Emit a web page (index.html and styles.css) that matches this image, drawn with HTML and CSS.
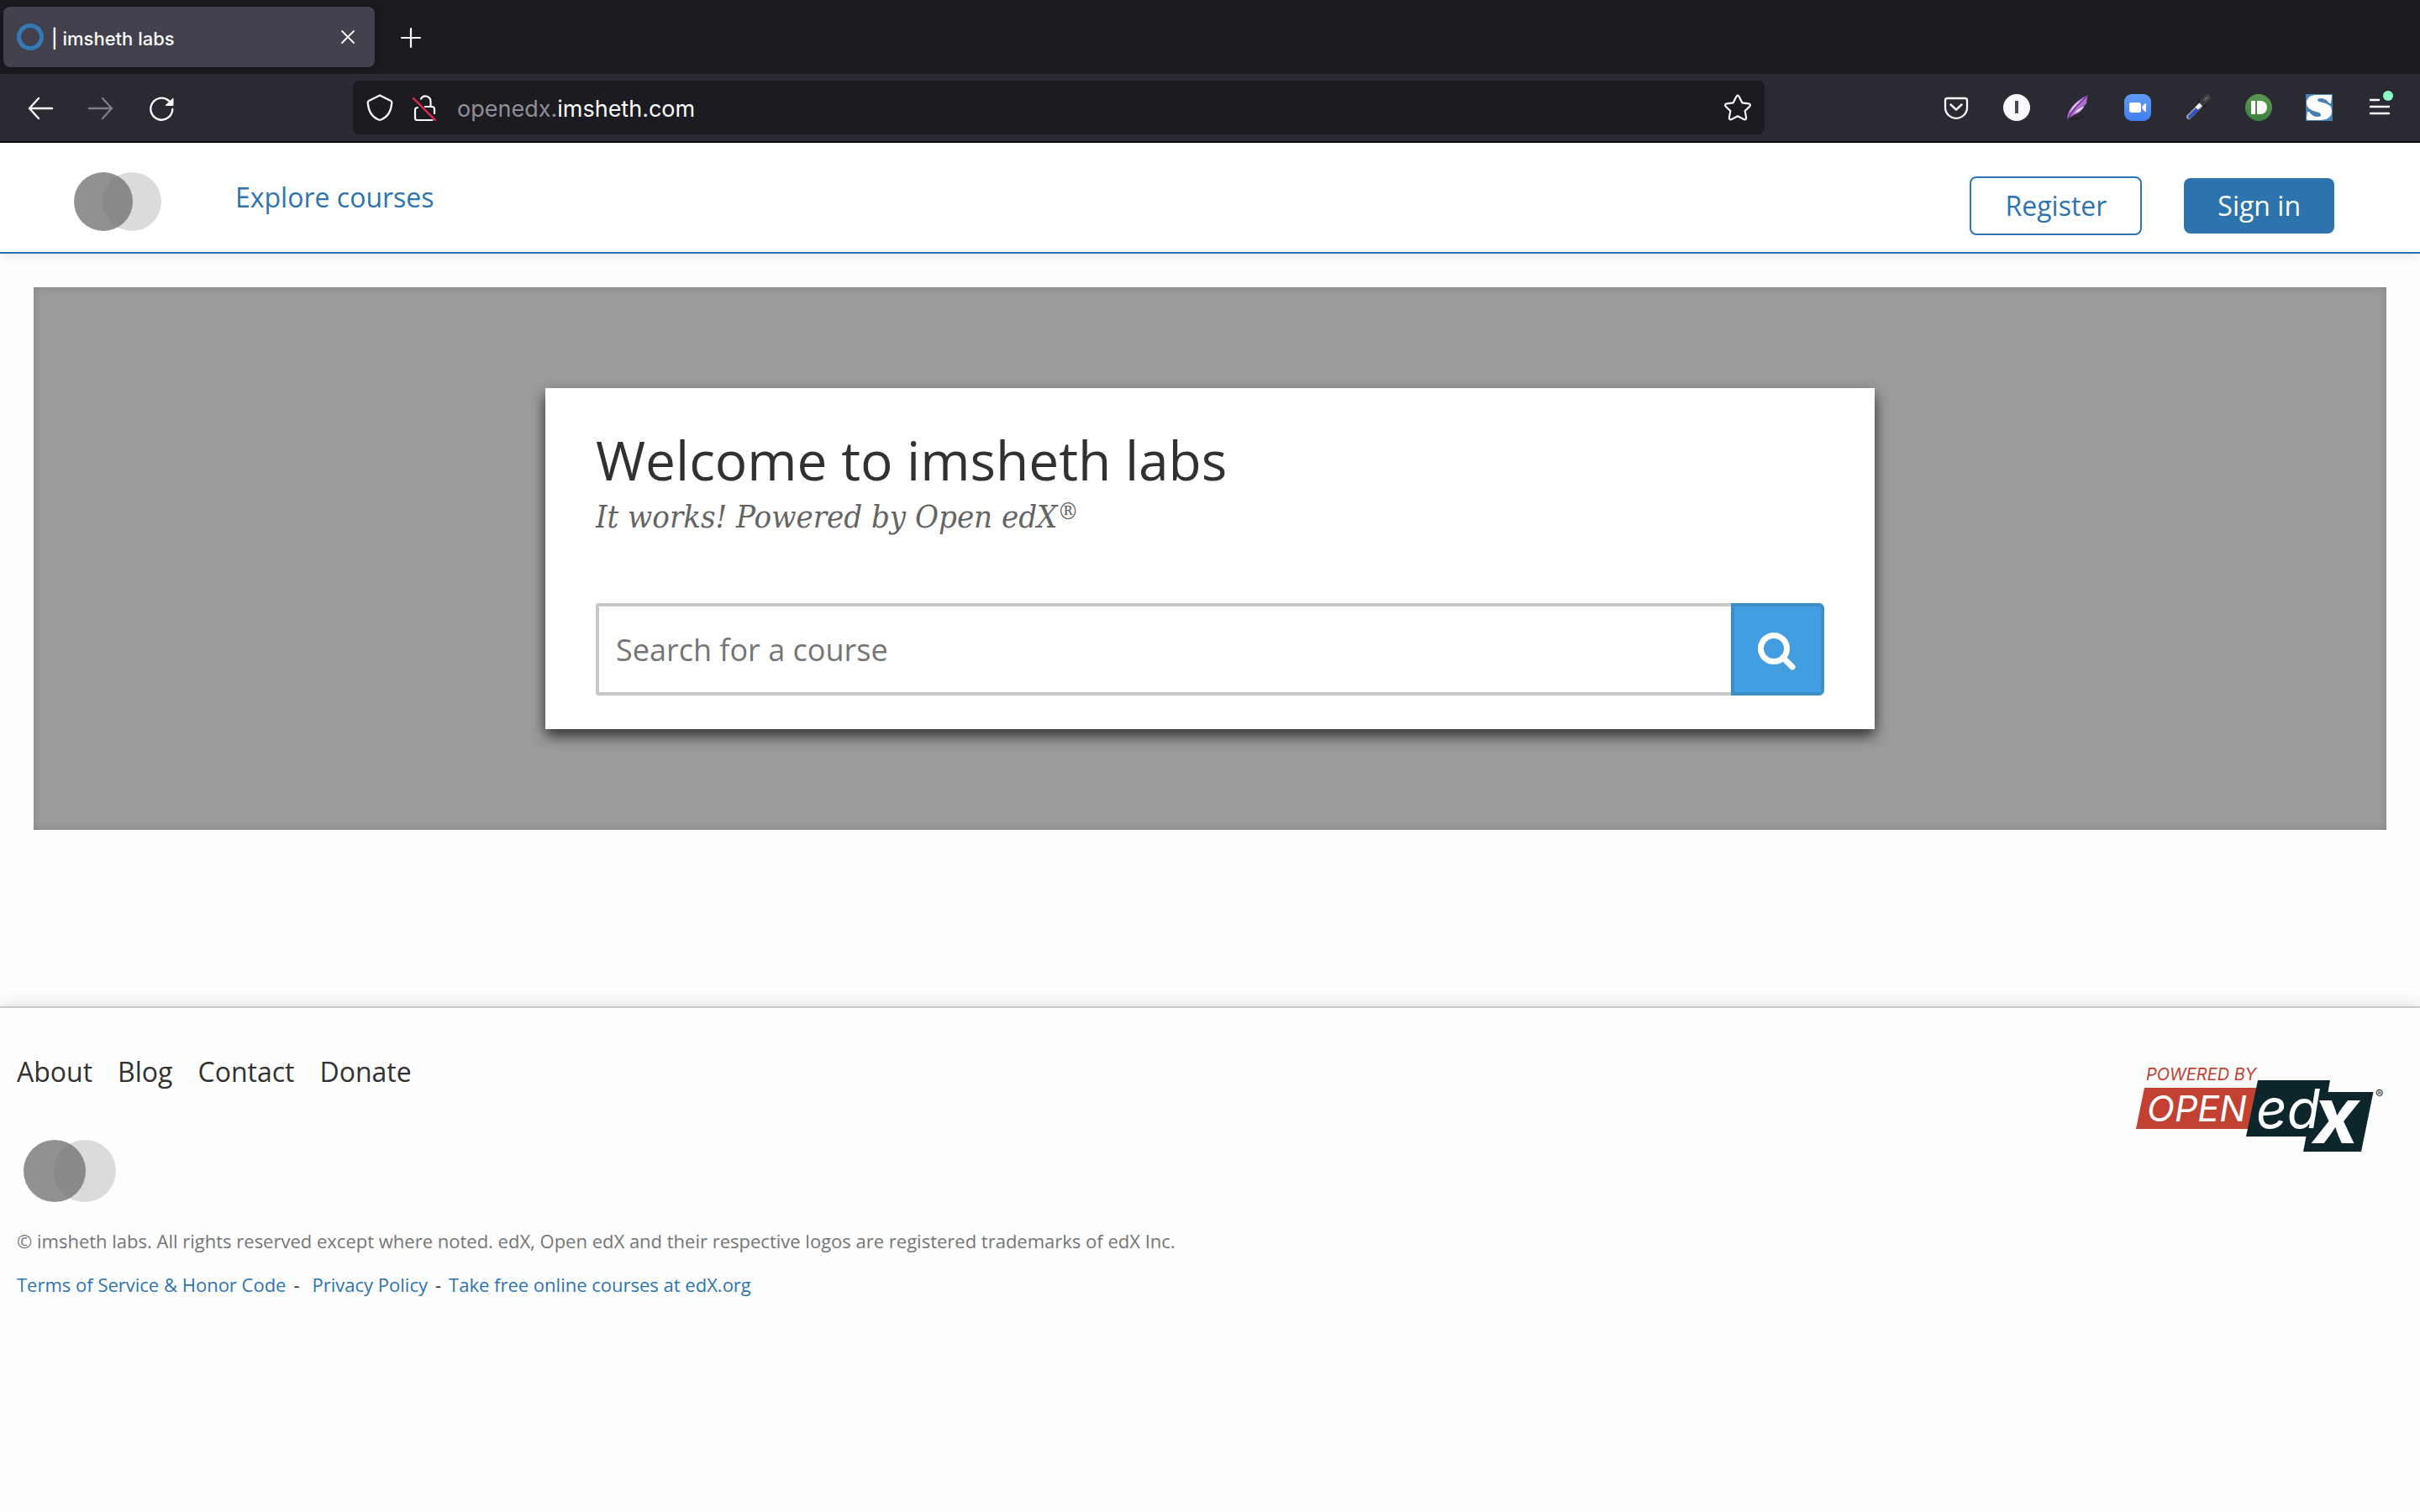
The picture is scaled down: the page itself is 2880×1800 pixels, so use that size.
FILE: index.html
```html
<!DOCTYPE html>
<html lang="en">
<head>
<meta charset="utf-8">
<title>| imsheth labs</title>
<link rel="stylesheet" href="styles.css">
</head>
<body>
<div class="browser">
  <div class="tab-strip">
    <div class="tab">
      <svg class="favicon" viewBox="0 0 32 32" aria-hidden="true"><circle cx="16" cy="16" r="13.500" fill="none" stroke="#337ab7" stroke-width="5"/></svg>
      <span class="tab-title">| imsheth labs</span>
      <button class="icon-button tab-close" aria-label="Close tab"><svg viewBox="0 0 16 16"><path d="M1 1l14 14M15 1L1 15" fill="none" stroke="#fbfbfe" stroke-width="1.800" stroke-linecap="round"/></svg></button>
    </div>
    <button class="icon-button new-tab" aria-label="New tab"><svg viewBox="0 0 24 24"><path d="M12 1v22M1 12h22" fill="none" stroke="#fbfbfe" stroke-width="2.200" stroke-linecap="round"/></svg></button>
  </div>
  <div class="toolbar">
    <div class="tool-group">
      <button class="icon-button tool" aria-label="Back"><svg viewBox="0 0 32 32"><path d="M30 17H3M14 5L3 17l11 12" fill="none" stroke="#fbfbfe" stroke-width="2.400" stroke-linecap="round" stroke-linejoin="round"/></svg></button>
      <button class="icon-button tool" aria-label="Forward" disabled><svg viewBox="0 0 32 32"><path d="M2 17h27M18 5l11 12-11 12" fill="none" stroke="#7e7d85" stroke-width="2.400" stroke-linecap="round" stroke-linejoin="round"/></svg></button>
      <button class="icon-button tool" aria-label="Reload"><svg viewBox="0 0 32 32"><path d="M29.300 18A13 13 0 1 1 25 8" fill="none" stroke="#fbfbfe" stroke-width="2.400" stroke-linecap="round"/><path d="M30 5v8.500h-9z" fill="#fbfbfe" stroke="#fbfbfe" stroke-linejoin="round"/></svg></button>
    </div>
    <div class="url-bar">
      <svg class="tool" viewBox="0 0 32 32" aria-hidden="true"><path d="M16 1.500L29 8q1.500.8 1.300 2.400C29.600 19 26 27 18 30.300q-2 .9-4 0C6 27 2.400 19 1.700 10.400Q1.500 8.800 3 8z" fill="none" stroke="#fbfbfe" stroke-width="2.200" stroke-linejoin="round"/></svg>
      <svg class="tool" viewBox="0 0 32 32" aria-hidden="true"><path d="M11 5.500a6.200 6.200 0 0 1 11.500 3.200v6M7 16q-3 .5-3 2.500v10q0 2.500 2.500 2.500h18M16 15h8q3 0 3 3v5" fill="none" stroke="#fbfbfe" stroke-width="2.200" stroke-linecap="round"/><path d="M2 5l26 26" stroke="#e22850" stroke-width="2.400" stroke-linecap="round"/></svg>
      <span class="url">openedx.<span class="url-domain">imsheth.com</span></span>
      <button class="icon-button tool" aria-label="Bookmark this page"><svg viewBox="0 0 32 32"><path d="M14.200 3.200q1.800-3 3.600 0l3.500 7.100 7.600 1q3.300.8 1.300 3.400l-5.500 5.400 1.400 7.900q.1 3.100-2.800 2L16 26.200 8.700 30q-2.900 1.100-2.800-2l1.400-7.900-5.500-5.400q-2-2.600 1.300-3.400l7.600-1z" fill="none" stroke="#fbfbfe" stroke-width="2.200" stroke-linejoin="round"/></svg></button>
    </div>
    <div class="tool-group">
      <button class="icon-button tool" aria-label="Save to Pocket"><svg viewBox="0 0 32 32"><path d="M5.500 5h21q2.500 0 2.500 2.500V16a13 12.800 0 0 1-26 0V7.500Q3 5 5.500 5z" fill="none" stroke="#fbfbfe" stroke-width="2.300"/><path d="M9.500 12.500l6.500 6.200 6.500-6.200" fill="none" stroke="#fbfbfe" stroke-width="2.500" stroke-linecap="round" stroke-linejoin="round"/></svg></button>
      <button class="icon-button tool" aria-label="Instapaper"><svg viewBox="0 0 32 32"><circle cx="16" cy="16" r="16" fill="#fbfbfe"/><path d="M14 8h4v15h-4z" fill="#4a4a52"/></svg></button>
      <button class="icon-button tool" aria-label="Feather"><svg viewBox="0 0 32 32"><path d="M10 30q9 1 17-4-8 2-17 3z" fill="#1f1d27"/><path d="M28.500 1Q16 7 10 15q-6 7-6 16 3-4 8-6 9-3 12-10l-2 .3Q28 12 27.500 7.500z" fill="#a96fce"/><path d="M26 4Q14 10 10 16l-4 7 8-8z" fill="#d9c4ee"/><path d="M25 14q-5 7-13 9l5-5z" fill="#e8dcf4"/><path d="M28 2Q12 16 4.500 30" stroke="#6f2c91" stroke-width="1.500" fill="none"/></svg></button>
      <button class="icon-button tool" aria-label="Zoom"><svg viewBox="0 0 32 32"><defs><linearGradient id="zoom-blue" x2="0" y2="1"><stop stop-color="#609bf4"/><stop offset="1" stop-color="#437ef0"/></linearGradient></defs><rect width="32" height="32" rx="9" fill="url(#zoom-blue)"/><path d="M6 12q0-2 2-2h9q3 0 3 3v7q0 2-2 2H9q-3 0-3-3zM21.500 14.500l3-3q1.500-1.200 1.500 0v9q0 1.200-1.500 0l-3-3z" fill="#fff"/></svg></button>
      <button class="icon-button tool" aria-label="Color picker"><svg viewBox="0 0 32 32"><path d="M19 13L5 27" stroke="#a2a2a6" stroke-width="6" stroke-linecap="round"/><path d="M15 18L6 27" stroke="#3552c8" stroke-width="4" stroke-linecap="round"/><path d="M20 11l-6 6" stroke="#eeeef4" stroke-width="4"/><path d="M18 8l6 6" stroke="#1c1c1e" stroke-width="4" stroke-linecap="round"/><path d="M22 9l5-5" stroke="#3c3c3e" stroke-width="8" stroke-linecap="round"/><path d="M24 7l3-3" stroke="#5a5a5c" stroke-width="3" stroke-linecap="round"/></svg></button>
      <button class="icon-button tool" aria-label="Pushbullet"><svg viewBox="0 0 32 32"><defs><linearGradient id="push-green" x2="0" y2="1"><stop stop-color="#5c9a50"/><stop offset="1" stop-color="#3c7f40"/></linearGradient></defs><circle cx="16" cy="16" r="16" fill="url(#push-green)"/><rect x="7" y="8" width="5" height="16" rx="1" fill="#fff"/><path d="M15 8h3a8 8 0 0 1 0 16h-3q-1 0-1-1V9q0-1 1-1z" fill="#fff"/></svg></button>
      <button class="icon-button tool" aria-label="Stylish"><svg viewBox="0 0 32 32"><rect width="32" height="32" fill="#4680b5"/><path d="M31 1l-1 10h-2q-3-5-9-6-5 0-5 2 0 2 6 3 11 2 11 10 0 11-15 11H3q-2 0-2-2l1-8h2q4 6 10 6 5 0 4-3-1-2-6-3Q1 18 1 11 1 1 13 1z" fill="#fff"/></svg></button>
      <button class="icon-button tool" aria-label="Open menu"><svg viewBox="0 0 32 32"><path d="M5 7h10M5 15h22M5 23h22" stroke="#fbfbfe" stroke-width="2.400" stroke-linecap="round"/><circle cx="26" cy="2" r="6" fill="#88ffc4"/></svg></button>
    </div>
  </div>
</div>

<header class="site-header">
  <a class="logo" href="#" aria-label="imsheth labs home"><svg viewBox="0 0 104 70"><circle cx="69" cy="35" r="35" fill="#dbdbdb"/><circle cx="35" cy="35" r="35" fill="#6f6f6f" fill-opacity=".76"/></svg></a>
  <nav class="main-nav"><a href="#">Explore courses</a></nav>
  <div class="account">
    <a class="button button-outline" href="#">Register</a>
    <a class="button button-solid" href="#">Sign in</a>
  </div>
</header>

<main>
  <section class="hero">
    <div class="welcome">
      <h1>Welcome to imsheth labs</h1>
      <p class="tagline">It works! Powered by Open edX<sup>®</sup></p>
      <form class="search">
        <input type="text" placeholder="Search for a course" aria-label="Search for a course">
        <button type="submit" aria-label="Search"><svg viewBox="0 0 46 46"><circle cx="19" cy="19" r="15.500" fill="none" stroke="#fff" stroke-width="7"/><path d="M31 31l10 10" stroke="#fff" stroke-width="7" stroke-linecap="round"/></svg></button>
      </form>
    </div>
  </section>
</main>

<footer class="site-footer">
  <div class="footer-main">
    <nav class="footer-nav"><a href="#">About</a><a href="#">Blog</a><a href="#">Contact</a><a href="#">Donate</a></nav>
    <a class="logo footer-logo" href="#" aria-label="imsheth labs home"><svg viewBox="0 0 104 70"><circle cx="69" cy="35" r="35" fill="#dbdbdb"/><circle cx="35" cy="35" r="35" fill="#6f6f6f" fill-opacity=".76"/></svg></a>
    <p class="copyright">© imsheth labs. All rights reserved except where noted. edX, Open edX and their respective logos are registered trademarks of edX Inc.</p>
    <p class="legal"><a href="#">Terms of Service &amp; Honor Code</a><span>-</span><a class="privacy" href="#">Privacy Policy</a><span>-</span><a href="#">Take free online courses at edX.org</a></p>
  </div>
  <a class="powered" href="#" aria-label="Powered by Open edX">
    <svg viewBox="0 0 300 104">
      <path d="M12 26h140l-8 49H2z" fill="#c24133"/>
      <path d="M147 17h86l-2.500 14h54l-14.500 71h-69l3.500-18h-71.500z" fill="#0c262b"/>
      <text class="mark-small" x="14" y="17">POWERED BY</text>
      <text class="mark-open" x="15" y="66">OPEN</text>
      <text class="mark-edx" x="145" y="74">ed<tspan class="mark-x" x="213" y="92">x</tspan></text>
      <text class="mark-reg" x="287" y="39">®</text>
    </svg>
  </a>
</footer>
</body>
</html>
```
FILE: styles.css
```css
* { box-sizing: border-box; }
body {
  margin: 0;
  background: #fefefe;
  color: #313131;
  font-family: "Open Sans", "Liberation Sans", sans-serif;
}
a { color: #2d74af; text-decoration: none; }
svg { display: block; overflow: visible; }

/* Browser window */
.browser {
  background: #2b2a33;
  border-bottom: 2px solid #0c0c0d;
  color: #fbfbfe;
  font-family: Inter, sans-serif;
}
.icon-button { padding: 0; border: 0; background: none; }
.tab-strip {
  display: flex;
  align-items: center;
  gap: 31px;
  height: 88px;
  padding: 0 4px;
  background: #1c1b22;
}
.tab {
  display: flex;
  align-items: center;
  gap: 9px;
  width: 442px;
  height: 72px;
  padding: 0 24px 0 16px;
  border-radius: 8px;
  background: #42414d;
  box-shadow: 0 0 8px rgba(0, 0, 0, .4);
}
.favicon { width: 32px; }
.tab-title { flex: 1; padding-top: 3px; font-size: 22px; font-weight: 500; }
.tab-close { width: 16px; }
.new-tab { width: 24px; padding-top: 2px; }
.toolbar {
  display: flex;
  align-items: center;
  height: 80px;
  padding: 0 32px;
}
.tool-group { display: flex; gap: 40px; }
.tool { width: 32px; flex: none; }
.url-bar {
  display: flex;
  flex: 1;
  align-items: center;
  gap: 22px;
  height: 64px;
  margin: 0 212px;
  padding: 0 16px;
  border-radius: 8px;
  background: #1c1b22;
}
.url { flex: 1; padding-top: 2px; color: #8f8e96; font-size: 27px; }
.url-domain { color: #fbfbfe; }

/* Site header */
.site-header {
  display: flex;
  align-items: flex-start;
  padding: 35px 102px 20px 88px;
  border-bottom: 2px solid #2d74af;
  background: #fff;
  box-shadow: 0 4px 12px rgba(0, 0, 0, .08);
}
.logo { width: 104px; }
.main-nav { padding: 6px 0 0 88px; font-size: 32px; line-height: 48px; }
.account { display: flex; align-items: center; gap: 50px; margin: 5px 0 0 auto; }
.button { padding: 8px 40px; border-radius: 8px; font-size: 32px; line-height: 50px; }
.button-outline { border: 2px solid #2d74af; }
.button-solid { background: #2d74af; color: #fff; }

/* Hero */
.hero {
  margin: 40px 40px 210px;
  padding: 120px 0;
  background: #9c9c9c;
  box-shadow: inset 0 0 12px rgba(0, 0, 0, .15);
}
.welcome {
  width: 56.5%;
  margin: 0 auto;
  padding: 46px 60px 40px;
  background: #fff;
  box-shadow: 0 8px 16px rgba(0, 0, 0, .7);
}
h1 { margin: 0; font-size: 64px; font-weight: 400; line-height: 80px; }
.tagline {
  margin: 0 0 76px;
  color: #646464;
  font-family: Georgia, "DejaVu Serif Condensed", "DejaVu Serif", serif;
  font-size: 38px;
  font-style: italic;
  line-height: 54px;
}
.tagline sup { font-size: 28px; line-height: 0; vertical-align: 10px; }
.search { display: flex; height: 110px; }
.search input {
  flex: 1;
  min-width: 0;
  padding: 0 20px;
  border: 4px solid #c8c8c8;
  border-right: 0;
  border-radius: 4px 0 0 4px;
  background: #fff;
  color: #313131;
  font-family: inherit;
  font-size: 36px;
}
.search input::placeholder { color: #757575; opacity: 1; }
.search button {
  display: grid;
  place-items: center;
  width: 111px;
  padding: 6px 2px 0 0;
  border: 4px solid #3d8dc6;
  border-radius: 0 6px 6px 0;
  background: #429de1;
}
.search svg { width: 46px; }

/* Footer */
.site-footer {
  display: flex;
  justify-content: space-between;
  padding: 52px 40px 57px 20px;
  border-top: 2px solid #c8c8c8;
  background: #fefefe;
  box-shadow: 0 -2px 20px rgba(0, 0, 0, .12), 0 4px 12px rgba(0, 0, 0, .03);
}
.footer-nav { display: flex; gap: 30px; font-size: 32px; line-height: 48px; }
.footer-nav a { color: #313131; }
.footer-logo { display: block; width: 110px; margin: 57px 0 26px 8px; }
.copyright { margin: 0; color: #757575; font-size: 22px; line-height: 40px; }
.legal { display: flex; gap: 9px; margin: 12px 0 0; font-size: 22px; line-height: 40px; }
.privacy { margin-left: 6px; }
.powered { width: 300px; margin-top: 17px; }
.powered text { font-family: Inter, sans-serif; font-style: italic; }
.mark-small { fill: #c24133; font-size: 20px; }
.mark-open { fill: #fff; font-size: 43px; }
.mark-edx { fill: #fff; font-size: 64px; }
.mark-x { font-size: 94px; font-weight: 700; }
.powered .mark-reg { fill: #0c262b; font-size: 14px; font-style: normal; }
```
